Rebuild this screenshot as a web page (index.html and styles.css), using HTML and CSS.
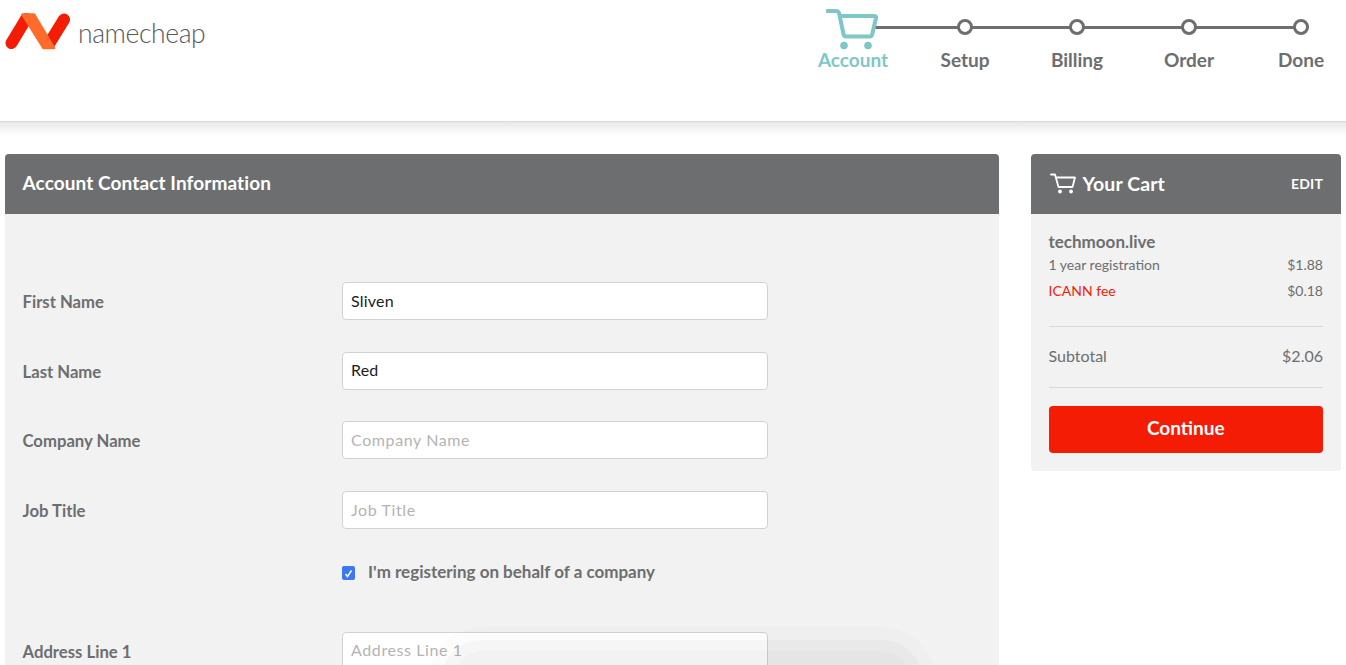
FILE: index.html
```html
<!DOCTYPE html>
<html lang="en">
<head>
<meta charset="utf-8">
<title>Namecheap checkout</title>
<link rel="stylesheet" href="styles.css">
</head>
<body>
<header class="topbar">
  <div class="brand">
    <svg class="logo" width="66" height="37" viewBox="0 0 66 37" aria-hidden="true">
      <path d="M21 6 L6.500 30" stroke="#f41c05" stroke-width="12" stroke-linecap="round" fill="none"/>
      <path d="M59 6.500 L44.500 30" stroke="#f41c05" stroke-width="12" stroke-linecap="round" fill="none"/>
      <path d="M17.500 1.500 H29 L49 35 H38.500 Z" fill="#ff6b2b" stroke="#ff6b2b" stroke-width="2.500" stroke-linejoin="round"/>
    </svg>
    <span class="wordmark">namecheap</span>
  </div>
  <nav class="steps">
    <div class="track"></div>
    <div class="step step-active">
      <svg class="cart-big" width="54" height="44" viewBox="0 0 54 44" aria-hidden="true">
        <path d="M1.500 3 H10 C11.500 3 12.500 3.800 13 5 L17.500 26 C17.800 27.500 18.800 28.500 20 28.500 H44 C45 28.500 45.700 27.800 46 27 L50 10 C50.300 8.700 49.500 8 48 8 H14" fill="none" stroke="#7fc7c7" stroke-width="4" stroke-linecap="round" stroke-linejoin="round"/>
        <circle cx="18" cy="37.500" r="3.800" fill="#7fc7c7"/>
        <circle cx="42" cy="37.500" r="3.800" fill="#7fc7c7"/>
      </svg>
      <span class="step-label">Account</span>
    </div>
    <div class="step"><span class="dot"></span><span class="step-label">Setup</span></div>
    <div class="step"><span class="dot"></span><span class="step-label">Billing</span></div>
    <div class="step"><span class="dot"></span><span class="step-label">Order</span></div>
    <div class="step"><span class="dot"></span><span class="step-label">Done</span></div>
  </nav>
</header>
<div class="header-shade"></div>
<main class="content">
  <section class="panel form-panel">
    <h2 class="panel-head">Account Contact Information</h2>
    <form class="form-body">
      <div class="row"><label class="field-label">First Name</label><input class="field" type="text" value="Sliven"></div>
      <div class="row"><label class="field-label">Last Name</label><input class="field" type="text" value="Red"></div>
      <div class="row"><label class="field-label">Company Name</label><input class="field" type="text" placeholder="Company Name"></div>
      <div class="row"><label class="field-label">Job Title</label><input class="field" type="text" placeholder="Job Title"></div>
      <div class="check-row">
        <span class="checkbox"><svg width="13" height="13" viewBox="0 0 13 13" aria-hidden="true"><path d="M3.500 7 L5.500 9.500 L9.500 3.500" fill="none" stroke="#fff" stroke-width="1.400"/></svg></span>
        <span class="check-label">I'm registering on behalf of a company</span>
      </div>
      <div class="row row-address"><label class="field-label">Address Line 1</label><input class="field" type="text" placeholder="Address Line 1"></div>
    </form>
  </section>
  <aside class="panel cart-panel">
    <div class="panel-head cart-head">
      <span class="cart-title">
        <svg width="27" height="21" viewBox="0 0 27 21" aria-hidden="true">
          <path d="M1 1.500 H5 L8.500 14 H22.500 L25 4.500 H6" fill="none" stroke="#fff" stroke-width="1.800" stroke-linejoin="round" stroke-linecap="round"/>
          <circle cx="10" cy="18.500" r="1.900" fill="#fff"/>
          <circle cx="21" cy="18.500" r="1.900" fill="#fff"/>
        </svg>
        Your Cart
      </span>
      <a class="edit">EDIT</a>
    </div>
    <div class="cart-body">
      <div class="domain">techmoon.live</div>
      <div class="line first-line"><span>1 year registration</span><span>$1.88</span></div>
      <div class="line fee-line"><span class="fee">ICANN fee</span><span>$0.18</span></div>
      <div class="subtotal"><span>Subtotal</span><span>$2.06</span></div>
      <button class="continue" type="button">Continue</button>
    </div>
  </aside>
</main>
<div class="overlay-glow"></div>
</body>
</html>
```
FILE: styles.css
```css
* { box-sizing: border-box; }
html, body { height: 100%; }
body {
  margin: 0;
  background: #fff;
  color: #6d6e70;
  font-family: "Lato", "Open Sans", sans-serif;
  overflow: hidden;
}
.topbar {
  height: 122px;
  display: flex;
  justify-content: space-between;
  align-items: flex-start;
  border-bottom: 1px solid #d8d8d8;
  background: #fff;
}
.brand {
  display: flex;
  align-items: center;
  gap: 7px;
  padding: 12px 0 0 5px;
}
.logo { display: block; }
.wordmark {
  font-family: "Lato", sans-serif;
  font-weight: 300;
  font-size: 26.500px;
  line-height: 34px;
  letter-spacing: -0.4px;
  color: #58595b;
  margin-top: 4px;
}
.steps {
  position: relative;
  display: flex;
  width: 560px;
  margin-right: -11px;
  padding-top: 8px;
  flex: none;
}
.track {
  position: absolute;
  left: 78px;
  right: 56px;
  top: 26px;
  height: 3px;
  background: #6d6e70;
}
.step {
  position: relative;
  width: 112px;
  flex: none;
  display: flex;
  flex-direction: column;
  align-items: center;
  padding-top: 11px;
}
.step-active { padding-top: 0; }
.cart-big { display: block; margin-bottom: 0; }
.dot {
  width: 16px;
  height: 16px;
  border: 3px solid #6d6e70;
  border-radius: 50%;
  background: #fff;
  margin-bottom: 14px;
}
.step-label {
  font-size: 19px;
  line-height: 22px;
  font-weight: 700;
  color: #6d6e70;
}
.step-active .step-label { color: #7fc7c7; margin-top: -3px; }
.header-shade {
  height: 14px;
  background: linear-gradient(#e9e9e9, #fff);
}
.content {
  display: flex;
  align-items: flex-start;
  gap: 32px;
  padding: 18px 5px 0;
}
.panel { background: #f2f2f2; border-radius: 4px; overflow: hidden; }
.form-panel { width: 994px; height: 560px; flex: none; }
.cart-panel { width: 310px; flex: none; }
.panel-head {
  height: 60px;
  margin: 0;
  padding: 0 18px 4px 17.500px;
  display: flex;
  align-items: center;
  background: #6d6e70;
  color: #fff;
  font-size: 19px;
  letter-spacing: 0.1px;
  font-weight: 700;
}
.form-body { padding: 68px 0 0 17.500px; }
.row {
  display: flex;
  align-items: center;
  height: 38px;
  margin-bottom: 31.700px;
}
.field-label {
  width: 319.500px;
  font-size: 16.700px;
  font-weight: 700;
  color: #6d6e70;
  flex: none;
  padding-top: 2px;
}
.field {
  width: 426px;
  height: 38px;
  border: 1px solid #d2d2d2;
  border-radius: 4px;
  background: #fff;
  padding: 0 8px 2px;
  font-family: inherit;
  font-size: 16px;
  letter-spacing: 0.2px;
  color: #1c1c1c;
  outline: none;
}
.field::placeholder { color: #b4b4b4; opacity: 1; letter-spacing: 0.6px; }
.check-row {
  display: flex;
  align-items: center;
  gap: 13px;
  height: 22px;
  margin: 0 0 49px 319.500px;
}
.checkbox {
  width: 13px;
  height: 14px;
  border-radius: 2px;
  background: #3b78f2;
  display: flex;
  align-items: center;
  justify-content: center;
  margin-top: 3px;
}
.checkbox svg { display: block; }
.check-label { font-size: 17px; font-weight: 700; color: #6d6e70; }
.row-address { margin-bottom: 0; }
.cart-head { justify-content: space-between; padding-bottom: 2px; }
.cart-title { display: flex; align-items: center; gap: 6px; font-size: 19.500px; margin-left: 1px; }
.cart-title svg { display: block; }
.edit { font-size: 14px; letter-spacing: 0.2px; margin-top: 0; }
.cart-body { padding: 18px 18px 18px 17.500px; }
.domain { font-size: 17px; line-height: 20px; font-weight: 700; }
.line {
  display: flex;
  justify-content: space-between;
  font-size: 14px;
  line-height: 16px;
}
.first-line { margin-top: 5px; }
.fee-line { margin-top: 10px; padding-bottom: 27px; border-bottom: 1px solid #d8d8d8; }
.fee { color: #f41c05; }
.subtotal {
  display: flex;
  justify-content: space-between;
  align-items: center;
  height: 61px;
  padding-bottom: 3px;
  font-size: 16px;
  border-bottom: 1px solid #d8d8d8;
}
.continue {
  display: block;
  width: 100%;
  height: 47px;
  margin-top: 18px;
  padding: 0 0 4px;
  border: 0;
  border-radius: 4px;
  background: #f41c05;
  color: #fff;
  font-family: inherit;
  font-size: 19px;
  font-weight: 700;
}
.overlay-glow {
  position: absolute;
  left: 452px;
  top: 651px;
  width: 460px;
  height: 120px;
  border-radius: 30px;
  background: rgba(0, 0, 0, 0.05);
  box-shadow: 0 0 0 11px rgba(0, 0, 0, 0.025), 0 0 0 24px rgba(0, 0, 0, 0.01);
  pointer-events: none;
}
```
